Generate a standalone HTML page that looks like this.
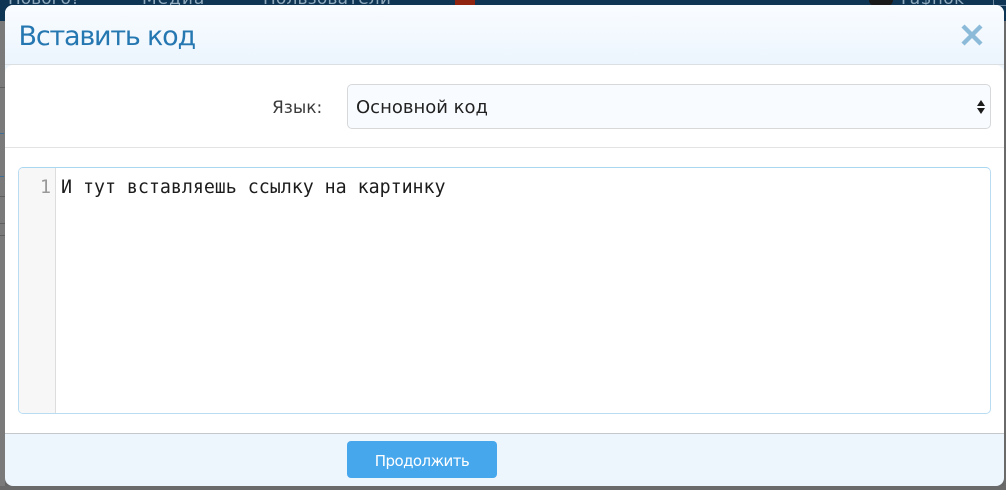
<!DOCTYPE html>
<html><head><meta charset="utf-8">
<style>
html,body{margin:0;padding:0}
body{width:1006px;height:490px;overflow:hidden;position:relative;background:#666;font-family:"DejaVu Sans","Liberation Sans",sans-serif}
.a{position:absolute;white-space:nowrap}
</style></head><body>
<div class="a" style="left:0;top:0;width:1006px;height:21px;background:#0e3553"></div>
<div class="a" style="left:0;top:21px;width:5px;height:469px;background:#7a7a7a"></div>
<div class="a" style="left:0;top:87px;width:5px;height:1px;background:#5f5f5f"></div>
<div class="a" style="left:0;top:133px;width:4px;height:1px;background:#3f6f96"></div>
<div class="a" style="left:0;top:176px;width:4px;height:1px;background:#3f6f96"></div>
<div class="a" style="left:0;top:196px;width:5px;height:1px;background:#5f5f5f"></div>
<div class="a" style="left:0;top:223px;width:5px;height:1px;background:#5f5f5f"></div>
<div class="a" style="left:0;top:235px;width:5px;height:1px;background:#5f5f5f"></div>
<div class="a" style="left:1004px;top:21px;width:2px;height:469px;background:#6a6a6a"></div>
<div class="a" style="left:0;top:486px;width:1006px;height:4px;background:#6a6a6a"></div>
<div class="a" style="left:8px;top:-11px;font-size:17px;color:#8fa9bd">Нового?</div>
<div class="a" style="left:142px;top:-11px;font-size:17px;color:#8fa9bd;letter-spacing:1px">Медиа</div>
<div class="a" style="left:263px;top:-11px;font-size:17px;color:#8fa9bd;letter-spacing:.15px">Пользователи</div>
<div class="a" style="left:455px;top:0;width:20px;height:6px;background:#8f2410"></div>
<div class="a" style="left:869px;top:-6px;width:24px;height:12px;border-radius:12px;background:#1a1a1a"></div>
<div class="a" style="left:901px;top:-11px;font-size:17px;color:#8fa9bd;letter-spacing:.5px">Fa$hok</div>
<div class="a" style="left:993px;top:-4px;width:14px;height:8px;border:1px solid #6f8ba3;border-radius:2px"></div>

<div class="a" style="left:5px;top:5px;width:999px;height:481px;border-radius:8px;overflow:hidden;background:#edf5fd">
  <div class="a" style="left:0;top:0;width:999px;height:59px;background:linear-gradient(#f9fcff,#ecf5fd);border-bottom:1px solid #dcdfe2"></div>
  <div class="a" style="left:13.5px;top:14px;font-size:27px;line-height:36px;color:#2577b1;letter-spacing:-1.2px">Вставить код</div>
  <svg class="a" style="left:956px;top:19px" width="22" height="22" viewBox="0 0 22 22"><path d="M2 2L20 20M20 2L2 20" stroke="#8cbad9" stroke-width="4.4" fill="none"/></svg>
  <div class="a" style="left:0;top:60px;width:999px;height:368px;background:#fff;border-radius:8px 8px 0 0"></div>
  <div class="a" style="left:0;top:142px;width:999px;height:1px;background:#e3e3e3"></div>
  <div class="a" style="left:267px;top:92px;font-size:17px;line-height:22px;color:#3a3a3a">Язык:</div>
  <div class="a" style="left:342px;top:79px;width:642px;height:43px;background:#f8fbff;border:1px solid #d6d8da;border-radius:5px"></div>
  <div class="a" style="left:351px;top:92px;font-size:18px;line-height:22px;color:#222">Основной код</div>
  <svg class="a" style="left:970px;top:94px" width="12" height="16" viewBox="0 0 12 16"><path d="M6 1L10 7H2ZM2 9H10L6 15Z" fill="#1c1c1c"/></svg>
  <div class="a" style="left:13px;top:162px;width:971px;height:245px;border:1px solid #b9dcf2;border-top-color:#a9d6f1;border-radius:5px;overflow:hidden;background:#fff">
    <div class="a" style="left:0;top:0;width:36px;height:245px;background:#f7f7f7;border-right:1px solid #ddd"></div>
    <div class="a" style="left:21px;top:9px;font:18.3px/22px 'DejaVu Sans Mono',monospace;color:#999">1</div>
    <div class="a" style="left:42px;top:9px;font:18.3px/22px 'DejaVu Sans Mono',monospace;color:#1c1c1c;letter-spacing:-.02px">И тут вставляешь ссылку на картинку</div>
  </div>
  <div class="a" style="left:0;top:428px;width:999px;height:1px;background:#c5c8ca"></div>
  <div class="a" style="left:342px;top:436px;width:150px;height:37px;background:#47a7ec;border-radius:4px;color:#fff;font-size:15px;line-height:41px;text-align:center;letter-spacing:-.55px">Продолжить</div>
</div>
</body></html>
